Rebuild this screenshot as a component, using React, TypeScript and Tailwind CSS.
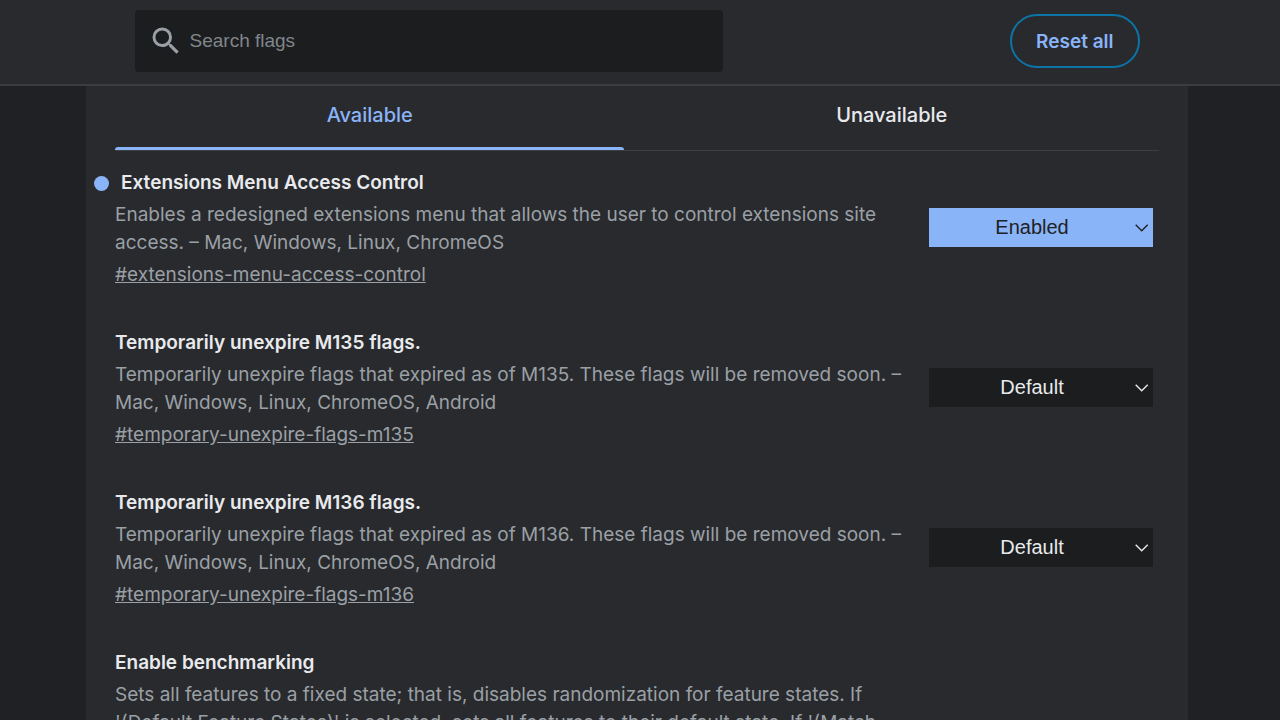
import { useState } from "react";

const options = ["Default", "Enabled", "Disabled"];

const initialFlags = [
  {
    id: "extensions-menu-access-control",
    title: "Extensions Menu Access Control",
    description:
      "Enables a redesigned extensions menu that allows the user to control extensions site access. – Mac, Windows, Linux, ChromeOS",
    value: "Enabled",
  },
  {
    id: "temporary-unexpire-flags-m135",
    title: "Temporarily unexpire M135 flags.",
    description:
      "Temporarily unexpire flags that expired as of M135. These flags will be removed soon. – Mac, Windows, Linux, ChromeOS, Android",
    value: "Default",
  },
  {
    id: "temporary-unexpire-flags-m136",
    title: "Temporarily unexpire M136 flags.",
    description:
      "Temporarily unexpire flags that expired as of M136. These flags will be removed soon. – Mac, Windows, Linux, ChromeOS, Android",
    value: "Default",
  },
  {
    id: "enable-benchmarking",
    title: "Enable benchmarking",
    description:
      "Sets all features to a fixed state; that is, disables randomization for feature states. If '(Default Feature States)' is selected, sets all features to their default state. If '(Match State to Field Trial testing Config)' is selected, sets all features to the state configured in the field trial testing config. This is used by developers and testers to diagnose whether an observed problem is caused by a non-default base::Feature configuration. – Mac, Windows, Linux, ChromeOS, Android",
    value: "Default",
  },
];

type Flag = (typeof initialFlags)[number];

function FlagRow({ flag, onChange }: { flag: Flag; onChange: (value: string) => void }) {
  const changed = flag.value !== "Default";

  return (
    <section className="flex items-center gap-6">
      <div className="min-w-0 flex-1">
        <h2 className={`flex items-center text-[19px] leading-7 font-semibold text-[#e8eaed] ${changed ? "-ml-[21px]" : ""}`}>
          {changed && <span className="mr-3 size-[15px] rounded-full bg-[#8ab4f8]" />}
          <label htmlFor={flag.id}>{flag.title}</label>
        </h2>
        <p className="mt-1 text-[19px] leading-7 text-[#9aa0a6]">{flag.description}</p>
        <a href={`#${flag.id}`} className="mt-1 block w-fit text-[19px] leading-7 text-[#9aa0a6] underline">
          #{flag.id}
        </a>
      </div>
      <div
        className={`relative mb-1 w-56 shrink-0 ${changed ? "bg-[#8ab4f8] text-[#202124]" : "bg-[#1c1d1f] text-[#e8eaed]"}`}
      >
        <select
          id={flag.id}
          value={flag.value}
          onChange={(e) => onChange(e.target.value)}
          className="block h-[39px] w-full appearance-none pr-[18px] text-center font-['Liberation_Sans',Arial,sans-serif] text-[20px]"
        >
          {options.map((o) => (
            <option key={o}>{o}</option>
          ))}
        </select>
        <svg
          className="pointer-events-none absolute top-4 right-1"
          width="14"
          height="8"
          viewBox="0 0 14 8"
          fill="none"
          stroke="currentColor"
          strokeWidth="1.4"
        >
          <path d="M0.7 0.7l6 6 6-6" />
        </svg>
      </div>
    </section>
  );
}

export default function App() {
  const [flags, setFlags] = useState(initialFlags);
  const [tab, setTab] = useState("Available");

  const setValue = (id: string, value: string) =>
    setFlags(flags.map((f) => (f.id === id ? { ...f, value } : f)));

  return (
    <div className="flex h-screen flex-col overflow-hidden bg-[#202124] font-[Inter,sans-serif]">
      <header className="shrink-0 border-b-2 border-[#3a3c40] bg-[#292a2d] pr-[6px]">
        <div className="mx-auto flex h-[84px] max-w-[1005px] items-center justify-between pb-[2px]">
          <label className="flex h-[62px] w-[588px] items-center rounded bg-[#1c1d1f] pl-[13px]">
            <svg width="36" height="36" viewBox="0 0 24 24" fill="#9aa0a6" className="mr-[6px]">
              <path d="M15.5 14h-.79l-.28-.27A6.471 6.471 0 0 0 16 9.5 6.5 6.5 0 1 0 9.5 16c1.61 0 3.09-.59 4.23-1.57l.27.28v.79l5 4.99L20.49 19l-4.99-5zm-6 0C7.01 14 5 11.99 5 9.5S7.01 5 9.5 5 14 7.01 14 9.5 11.99 14 9.5 14z" />
            </svg>
            <input
              type="text"
              aria-label="Search flags"
              placeholder="Search flags"
              className="min-w-0 flex-1 bg-transparent font-['Liberation_Sans',Arial,sans-serif] text-[19px] text-[#e8eaed] outline-none placeholder:text-[#80868b]"
            />
          </label>
          <button
            type="button"
            onClick={() => setFlags(flags.map((f) => ({ ...f, value: "Default" })))}
            className="h-[54px] rounded-full border-2 border-[#0b74a8] px-6 pt-[2px] text-[19px] font-semibold text-[#8ab4f8]"
          >
            Reset all
          </button>
        </div>
      </header>

      <div className="min-h-0 flex-1 overflow-hidden pr-[6px]">
        <main className="mx-auto min-h-full max-w-[1102px] bg-[#292a2d] px-[29px]">
          <div role="tablist" className="flex border-b border-[#3c4043]">
            {["Available", "Unavailable"].map((name) => (
              <button
                key={name}
                type="button"
                role="tab"
                aria-selected={tab === name}
                onClick={() => setTab(name)}
                className={`flex h-16 flex-auto flex-col items-center text-[20px] font-medium ${
                  tab === name ? "text-[#8ab4f8]" : "text-[#e8eaed]"
                }`}
              >
                <span className="flex flex-1 items-center pb-1">{name}</span>
                <span className={`h-[3px] w-full rounded-t-full ${tab === name ? "bg-[#8ab4f8]" : ""}`} />
              </button>
            ))}
          </div>

          <div className="flex flex-col gap-10 pt-[18px] pr-[6px]">
            {flags.map((flag) => (
              <FlagRow key={flag.id} flag={flag} onChange={(value) => setValue(flag.id, value)} />
            ))}
          </div>
        </main>
      </div>
    </div>
  );
}
